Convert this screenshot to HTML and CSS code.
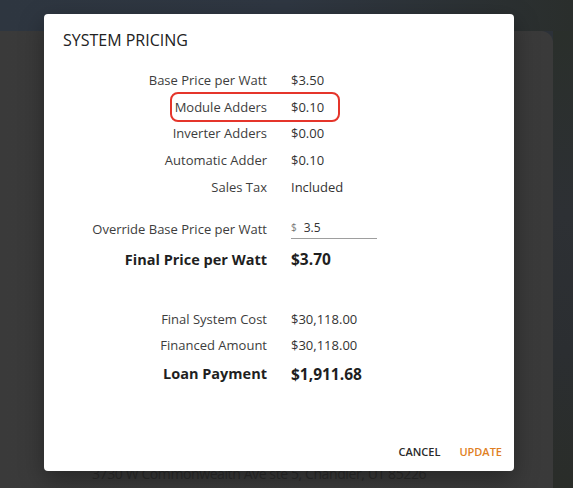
FILE: index.html
```html
<!DOCTYPE html>
<html>
  <head>
    <meta http-equiv="Content-Type" content="text/html; charset=UTF-8" />
    <title>System Pricing</title>
    <link rel="stylesheet" href="styles.css">
  </head>
  <body>
    <div class="scene">
      <div class="photo-top"></div>
      <div class="page-card">
        <p class="address">3730 W Commonwealth Ave ste 5, Chandler, UT 85226</p>
      </div>
      <div class="trees"></div>
    </div>

    <div class="dialog">
      <h2 class="dialog-title">SYSTEM PRICING</h2>

      <div class="rows">
        <div class="row"><span class="label">Base Price per Watt</span><span class="value">$3.50</span></div>
        <div class="row highlight"><span class="label">Module Adders</span><span class="value">$0.10</span></div>
        <div class="row"><span class="label">Inverter Adders</span><span class="value">$0.00</span></div>
        <div class="row"><span class="label">Automatic Adder</span><span class="value">$0.10</span></div>
        <div class="row"><span class="label">Sales Tax</span><span class="value">Included</span></div>
      </div>

      <div class="rows override">
        <div class="row">
          <span class="label">Override Base Price per Watt</span>
          <span class="value">
            <span class="field"><span class="prefix">$</span><input type="text" value="3.5" /></span>
          </span>
        </div>
        <div class="row big"><span class="label">Final Price per Watt</span><span class="value">$3.70</span></div>
      </div>

      <div class="rows totals">
        <div class="row"><span class="label">Final System Cost</span><span class="value">$30,118.00</span></div>
        <div class="row"><span class="label">Financed Amount</span><span class="value">$30,118.00</span></div>
        <div class="row big"><span class="label">Loan Payment</span><span class="value">$1,911.68</span></div>
      </div>

      <div class="actions">
        <button class="btn">CANCEL</button>
        <button class="btn primary">UPDATE</button>
      </div>
    </div>
  </body>
</html>
```

FILE: styles.css
```css
html,
body {
  margin: 0;
  height: 100%;
  overflow: hidden;
}
body {
  font-family: "Open Sans", "Noto Sans", sans-serif;
  background-color: #2c3138;
}
.scene {
  display: grid;
  grid-template-columns: 553px 1fr;
  grid-template-rows: 31px 1fr;
  height: 100%;
}
.photo-top {
  grid-column: 1 / 3;
  grid-row: 1;
  background: linear-gradient(90deg, #2e3640 0%, #2f3742 50%, #2a2e2c 100%);
}
.page-card {
  grid-column: 1;
  grid-row: 2;
  background: linear-gradient(90deg, #3a3a3a 0%, #3c3c3c 60%, #3a3a3a 100%);
  border-top-right-radius: 12px;
  display: flex;
  align-items: flex-end;
}
.trees {
  grid-column: 2;
  grid-row: 2;
  background: linear-gradient(180deg, #2a2f2b 0%, #2d3034 40%, #2b2e31 70%, #2a2d29 100%);
}
.address {
  margin: 0 0 5px 92px;
  font-size: 14px;
  letter-spacing: -0.4px;
  color: #2b2b2b;
  white-space: nowrap;
}

.dialog {
  position: absolute;
  left: 44px;
  top: 14px;
  width: 470px;
  height: 457px;
  box-sizing: border-box;
  background: #fff;
  border-radius: 4px;
  box-shadow: 0 8px 24px rgba(0, 0, 0, 0.35);
  padding: 14px 0 0 0;
  display: flex;
  flex-direction: column;
}
.dialog-title {
  margin: 0 0 0 19px;
  font-size: 16px;
  font-weight: 400;
  line-height: 24px;
  color: #222;
}

.rows {
  display: flex;
  flex-direction: column;
}
.rows:first-of-type {
  margin-top: 15px;
}
.row {
  position: relative;
  display: grid;
  grid-template-columns: 223px auto;
  column-gap: 24px;
  height: 26.6px;
  align-items: center;
  font-size: 13px;
  color: #3d3d3d;
}
.label {
  text-align: right;
  white-space: nowrap;
}
.value {
  color: #333;
  white-space: nowrap;
}
.highlight::before {
  content: "";
  position: absolute;
  left: 126px;
  width: 166px;
  top: -2px;
  bottom: -2px;
  border: 2px solid #e5352b;
  border-radius: 8px;
}

.override {
  margin-top: 16px;
}
.override .row:first-child {
  height: 26px;
}
.big {
  font-size: 14.5px;
  font-weight: 700;
  color: #1f1f1f;
  height: 35px;
}
.big .value {
  font-size: 15.5px;
  color: #1f1f1f;
}
.field {
  display: flex;
  align-items: center;
  width: 86px;
  border-bottom: 1px solid #9e9e9e;
  padding-bottom: 2px;
}
.prefix {
  font-size: 10px;
  color: #777;
  margin-right: 7px;
}
.field input {
  border: none;
  outline: none;
  padding: 0;
  width: 60px;
  font-family: inherit;
  font-size: 12px;
  color: #333;
  background: transparent;
}

.totals {
  margin-top: 29px;
}
.totals .row:nth-child(2) {
  height: 25.6px;
}
.totals .big {
  height: 31px;
}

.actions {
  margin-top: auto;
  display: flex;
  justify-content: flex-end;
  gap: 1px;
  padding: 0 4px 4px 0;
}
.btn {
  background: none;
  border: none;
  font-family: inherit;
  font-size: 11px;
  font-weight: 600;
  color: #2a2a2a;
  padding: 8px 9px;
  cursor: pointer;
}
.btn.primary {
  color: #e07f24;
  padding-right: 9px;
  margin-right: -1px;
}
```
